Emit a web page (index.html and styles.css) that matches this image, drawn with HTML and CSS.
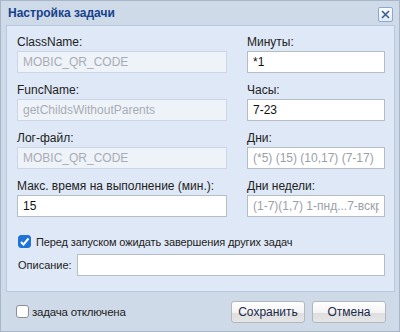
FILE: index.html
```html
<!DOCTYPE html>
<html lang="ru">
<head>
  <meta charset="UTF-8">
  <title>Настройка задачи</title>
  <link rel="stylesheet" href="styles.css">
</head>
<body>
  <div class="window">
    <div class="header">
      <span class="title">Настройка задачи</span>
      <span class="close">
        <svg width="11" height="11" viewBox="0 0 11 11"><path d="M2 2 L9 9 M9 2 L2 9" stroke="#3b5a9a" stroke-width="1.6" fill="none"/></svg>
      </span>
    </div>

    <div class="body">
      <div class="grid">
        <div class="field">
          <label>ClassName:</label>
          <input type="text" class="disabled" value="MOBIC_QR_CODE" disabled>
        </div>
        <div class="field">
          <label>Минуты:</label>
          <input type="text" value="*1">
        </div>
        <div class="field">
          <label>FuncName:</label>
          <input type="text" class="disabled" value="getChildsWithoutParents" disabled>
        </div>
        <div class="field">
          <label>Часы:</label>
          <input type="text" value="7-23">
        </div>
        <div class="field">
          <label>Лог-файл:</label>
          <input type="text" class="disabled" value="MOBIC_QR_CODE" disabled>
        </div>
        <div class="field">
          <label>Дни:</label>
          <input type="text" placeholder="(*5) (15) (10,17) (7-17)">
        </div>
        <div class="field">
          <label>Макс. время на выполнение (мин.):</label>
          <input type="text" value="15">
        </div>
        <div class="field">
          <label>Дни недели:</label>
          <input type="text" placeholder="(1-7)(1,7) 1-пнд...7-вскр">
        </div>
      </div>

      <div class="check-row wait">
        <span class="check checked">
          <svg width="11" height="11" viewBox="0 0 11 11"><path d="M2 6 L4.5 8.5 L9.5 2.5" stroke="#fff" stroke-width="2" fill="none"/></svg>
        </span>
        <span>Перед запуском ожидать завершения других задач</span>
      </div>

      <div class="desc-row">
        <label>Описание:</label>
        <input type="text">
      </div>
    </div>

    <div class="footer">
      <div class="check-row off">
        <span class="check"></span>
        <span>задача отключена</span>
      </div>
      <div class="buttons">
        <button>Сохранить</button>
        <button>Отмена</button>
      </div>
    </div>
  </div>
</body>
</html>
```

FILE: styles.css
```css
html, body {
  margin: 0;
  padding: 0;
}
body {
  font-family: "Liberation Sans", Arial, sans-serif;
  font-size: 12px;
  color: #111;
}
.window {
  width: 400px;
  height: 332px;
  box-sizing: border-box;
  background-color: #cfdae8;
  border: 1px solid #a9b6c8;
  display: flex;
  flex-direction: column;
}
.header {
  height: 24px;
  display: flex;
  align-items: center;
  justify-content: space-between;
  padding: 0 6px 0 7px;
}
.title {
  font-weight: bold;
  color: #15428b;
  font-size: 12px;
}
.close {
  width: 13px;
  height: 13px;
  border: 1px solid #8fa7cf;
  border-radius: 2px;
  background: linear-gradient(#fbfcfe, #e3ebf7);
  display: flex;
  align-items: center;
  justify-content: center;
  margin-top: 2px;
}
.body {
  margin: 0 4px 0 5px;
  height: 267px;
  box-sizing: border-box;
  background-color: #dfe8f6;
  border: 1px solid #b7c8e0;
  padding: 9px 9px 0 10px;
}
.grid {
  display: grid;
  grid-template-columns: 210px 138px;
  column-gap: 20px;
  row-gap: 10px;
}
.field label {
  display: block;
  line-height: 14px;
  margin-bottom: 2px;
  color: #222;
}
input[type="text"] {
  width: 100%;
  height: 22px;
  box-sizing: border-box;
  border: 1px solid #b5bdc9;
  background-color: #fff;
  font-family: "Liberation Sans", Arial, sans-serif;
  font-size: 12px;
  padding: 0 5px;
  color: #111;
  outline: none;
}
input::placeholder {
  color: #9aa0a8;
}
input.disabled {
  background-color: #eef3fa;
  border-color: #cbd5e3;
  color: #a8acb2;
}
.check-row {
  display: flex;
  align-items: center;
  gap: 5px;
  margin-top: 18px;
  margin-left: 1px;
  font-size: 11px;
  color: #222;
}
.check-row.wait span:last-child {
  letter-spacing: -0.12px;
}
.check {
  width: 13px;
  height: 13px;
  box-sizing: border-box;
  border: 1px solid #8a8f96;
  border-radius: 3px;
  background: #fff;
  display: flex;
  align-items: center;
  justify-content: center;
}
.check.checked {
  background: #1f73d6;
  border-color: #1f73d6;
}
.desc-row {
  display: flex;
  align-items: center;
  margin-top: 6px;
}
.desc-row label {
  flex: 0 0 59px;
  margin-left: 1px;
  font-size: 11px;
  color: #222;
}
.desc-row input {
  flex: 1;
}
.footer {
  flex: 1;
  display: flex;
  align-items: center;
  justify-content: space-between;
  padding: 0 13px 0 15px;
}
.footer .check-row {
  margin: 0;
  gap: 3px;
  font-size: 11.5px;
  letter-spacing: -0.2px;
}
.buttons {
  display: flex;
  gap: 7px;
}
button {
  width: 74px;
  height: 22px;
  font-family: "Liberation Sans", Arial, sans-serif;
  font-size: 12px;
  color: #1b2a4a;
  border: 1px solid #b3b7bd;
  border-radius: 3px;
  background: linear-gradient(#ffffff 0%, #f3f3f3 55%, #dedede 56%, #e6e6e6 100%);
  padding: 0;
  cursor: pointer;
}
```
